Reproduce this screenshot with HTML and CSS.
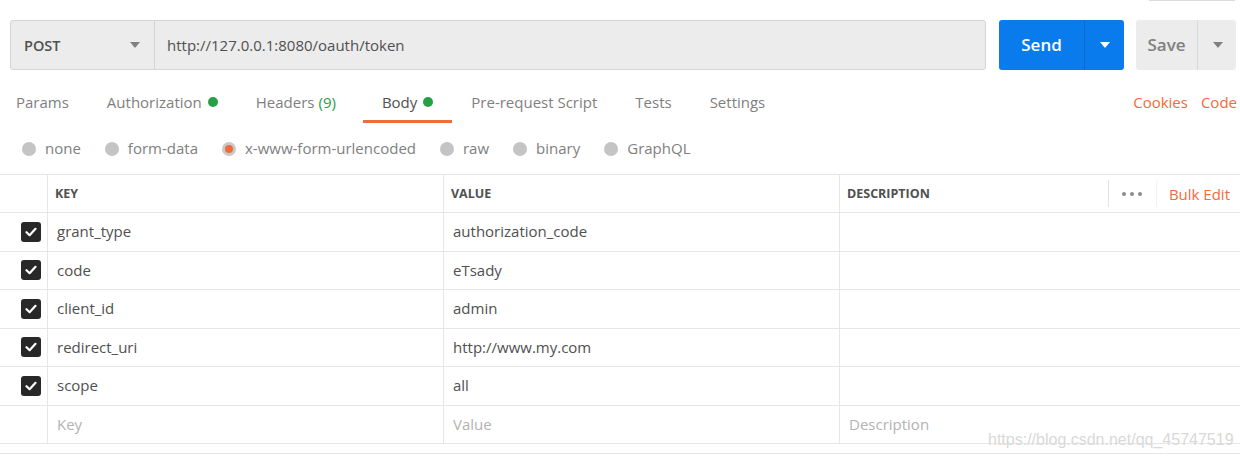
FILE: index.html
```html
<!DOCTYPE html>
<html>
<head>
<meta charset="utf-8">
<link rel="stylesheet" href="styles.css">
</head>
<body>
<div class="page">
  <div class="topstrip"></div>
  <div class="request">
    <div class="url-bar">
      <div class="method">
        <span class="method-name">POST</span>
        <span class="caret gray"></span>
      </div>
      <div class="url">http://127.0.0.1:8080/oauth/token</div>
    </div>
    <div class="send">
      <div class="send-main">Send</div>
      <div class="send-drop"><span class="caret white"></span></div>
    </div>
    <div class="save">
      <div class="save-main">Save</div>
      <div class="save-drop"><span class="caret gray"></span></div>
    </div>
  </div>

  <div class="tabs">
    <div class="tab first">Params</div>
    <div class="tab">Authorization <span class="dot"></span></div>
    <div class="tab">Headers <span class="count">(9)</span></div>
    <div class="tab active">Body <span class="dot"></span></div>
    <div class="tab">Pre-request Script</div>
    <div class="tab">Tests</div>
    <div class="tab">Settings</div>
    <div class="tab-links">
      <span class="link">Cookies</span>
      <span class="link">Code</span>
    </div>
  </div>

  <div class="radios">
    <div class="radio"><span class="circle"></span>none</div>
    <div class="radio"><span class="circle"></span>form-data</div>
    <div class="radio"><span class="circle on"></span>x-www-form-urlencoded</div>
    <div class="radio"><span class="circle"></span>raw</div>
    <div class="radio"><span class="circle"></span>binary</div>
    <div class="radio"><span class="circle"></span>GraphQL</div>
  </div>

  <div class="kv">
    <div class="row head">
      <div class="cell chk"></div>
      <div class="cell">KEY</div>
      <div class="cell">VALUE</div>
      <div class="cell desc-head">
        <span>DESCRIPTION</span>
        <div class="actions">
          <span class="more"><svg width="20" height="4" viewBox="0 0 20 4"><circle cx="2" cy="2" r="2" fill="#8a8a8a"/><circle cx="10" cy="2" r="2" fill="#8a8a8a"/><circle cx="18" cy="2" r="2" fill="#8a8a8a"/></svg></span>
          <span class="bulk">Bulk Edit</span>
        </div>
      </div>
    </div>
    <div class="row">
      <div class="cell chk"><span class="box"><svg width="12" height="10" viewBox="0 0 12 10"><path d="M1.5 5.2 L4.6 8.2 L10.5 1.8" fill="none" stroke="#fff" stroke-width="2.2" stroke-linecap="round" stroke-linejoin="round"/></svg></span></div>
      <div class="cell">grant_type</div>
      <div class="cell">authorization_code</div>
      <div class="cell"></div>
    </div>
    <div class="row">
      <div class="cell chk"><span class="box"><svg width="12" height="10" viewBox="0 0 12 10"><path d="M1.5 5.2 L4.6 8.2 L10.5 1.8" fill="none" stroke="#fff" stroke-width="2.2" stroke-linecap="round" stroke-linejoin="round"/></svg></span></div>
      <div class="cell">code</div>
      <div class="cell">eTsady</div>
      <div class="cell"></div>
    </div>
    <div class="row">
      <div class="cell chk"><span class="box"><svg width="12" height="10" viewBox="0 0 12 10"><path d="M1.5 5.2 L4.6 8.2 L10.5 1.8" fill="none" stroke="#fff" stroke-width="2.2" stroke-linecap="round" stroke-linejoin="round"/></svg></span></div>
      <div class="cell">client_id</div>
      <div class="cell">admin</div>
      <div class="cell"></div>
    </div>
    <div class="row">
      <div class="cell chk"><span class="box"><svg width="12" height="10" viewBox="0 0 12 10"><path d="M1.5 5.2 L4.6 8.2 L10.5 1.8" fill="none" stroke="#fff" stroke-width="2.2" stroke-linecap="round" stroke-linejoin="round"/></svg></span></div>
      <div class="cell">redirect_uri</div>
      <div class="cell">http://www.my.com</div>
      <div class="cell"></div>
    </div>
    <div class="row">
      <div class="cell chk"><span class="box"><svg width="12" height="10" viewBox="0 0 12 10"><path d="M1.5 5.2 L4.6 8.2 L10.5 1.8" fill="none" stroke="#fff" stroke-width="2.2" stroke-linecap="round" stroke-linejoin="round"/></svg></span></div>
      <div class="cell">scope</div>
      <div class="cell">all</div>
      <div class="cell"></div>
    </div>
    <div class="row">
      <div class="cell chk"></div>
      <div class="cell ph">Key</div>
      <div class="cell ph">Value</div>
      <div class="cell ph">Description</div>
    </div>
  </div>
  <div class="footer-line"></div>
  <div class="watermark">https://blog.csdn.net/qq_45747519</div>
</div>
</body>
</html>
```

FILE: styles.css
```css
* { box-sizing: border-box; }
html, body { margin: 0; padding: 0; background: #fff; }
body {
  font-family: "Open Sans", "DejaVu Sans", sans-serif;
  font-size: 15px;
  color: #505050;
}
.page { position: relative; width: 1240px; height: 460px; overflow: hidden; }

.topstrip {
  height: 1px;
  width: 86px;
  margin-left: auto;
  margin-right: 5px;
  background: #dcdcdc;
}

.request {
  display: flex;
  margin-top: 19px;
  padding: 0 4px 0 10px;
  height: 50px;
}
.url-bar {
  flex: 1;
  display: flex;
  background: #ececec;
  border: 1px solid #d5d5d5;
  border-radius: 3px;
}
.method {
  width: 144px;
  display: flex;
  align-items: center;
  justify-content: space-between;
  padding: 0 14px 0 13px;
  border-right: 1px solid #d5d5d5;
}
.method-name { font-weight: 600; color: #505050; font-size: 14.5px; }
.url { display: flex; align-items: center; padding-left: 12px; color: #505050; }

.caret {
  width: 0; height: 0;
  border-left: 5px solid transparent;
  border-right: 5px solid transparent;
  border-top: 6px solid #808080;
}
.caret.white { border-top-color: #fff; }
.caret.gray { border-top-color: #808080; }

.send {
  margin-left: 13px;
  width: 125px;
  display: flex;
  background: #097bed;
  border-radius: 3px;
}
.send-main {
  width: 86px;
  display: flex; align-items: center; justify-content: center;
  color: #fff; font-size: 17px; font-weight: 600;
  padding-bottom: 1px;
  border-right: 1px solid #0a6cd2;
}
.send-drop { flex: 1; display: flex; align-items: center; justify-content: center; padding-left: 1px; }

.save {
  margin-left: 12px;
  width: 100px;
  display: flex;
  background: #ececec;
  border-radius: 3px;
}
.save-main {
  width: 62px;
  display: flex; align-items: center; justify-content: center;
  color: #808080; font-size: 17px; font-weight: 600;
  padding-bottom: 1px;
  border-right: 1px solid #d9d9d9;
}
.save-drop { flex: 1; display: flex; align-items: center; justify-content: center; padding-left: 2px; }

.tabs {
  display: flex;
  height: 53px;
}
.tab {
  display: flex;
  align-items: center;
  height: 53px;
  padding: 15px 19px 1px;
  border-bottom: 3px solid transparent;
  color: #808080;
  white-space: nowrap;
}
.tab.first { padding-left: 16px; }
.tab.active { color: #505050; border-bottom-color: #f26b3a; margin-left: 8px; }
.dot {
  display: inline-block;
  width: 10px; height: 10px;
  border-radius: 50%;
  background: #26a047;
  margin-left: 6px;
}
.count { color: #26a047; margin-left: 4px; }
.tab-links {
  margin-left: auto;
  display: flex;
  align-items: center;
  gap: 13px;
  padding: 15px 3px 4px 0;
}
.link { color: #f26b3a; }

.radios {
  display: flex;
  align-items: center;
  height: 51px;
  padding: 0 0 1px 22px;
  gap: 24px;
}
.radio { display: flex; align-items: center; gap: 9px; color: #808080; }
.circle {
  width: 14px; height: 14px;
  border-radius: 50%;
  background: #c4c4c4;
  margin-top: 1px;
}
.circle.on { background: #f26b3a; border: 3px solid #c9c9c9; }

.kv { border-top: 1px solid #e6e6e6; }
.row {
  display: grid;
  grid-template-columns: 47px 396px 396px 1fr;
  height: 38.5px;
  border-bottom: 1px solid #e6e6e6;
}
.row.head { height: 38px; }
.cell {
  display: flex;
  align-items: center;
  padding-left: 9px;
  padding-bottom: 1px;
  border-left: 1px solid #e6e6e6;
  color: #505050;
  white-space: nowrap;
}
.cell.chk { border-left: none; padding-left: 21px; padding-bottom: 0; }
.head .cell { font-size: 12.5px; font-weight: 700; padding-left: 7px; padding-bottom: 0; }
.head .cell.chk { padding-left: 0; }
.cell.ph { color: #b3b3b3; }

.box {
  width: 20px; height: 20px;
  border-radius: 3px;
  background: #282828;
  display: flex; align-items: center; justify-content: center;
}

.desc-head { justify-content: space-between; padding-right: 10px; }
.actions { display: flex; align-items: center; height: 100%; }
.more {
  display: flex; align-items: center;
  height: 27px;
  border-left: 1px solid #e3e3e3;
  padding: 0 14px 0 13px;
}
.bulk {
  display: flex; align-items: center;
  height: 27px;
  border-left: 1px solid #f1f1f1;
  border-radius: 3px 0 0 3px;
  padding-left: 12px;
  color: #f26b3a;
  font-size: 15px;
  font-weight: 400;
}

.footer-line { margin-top: 9px; border-top: 1px solid #e6e6e6; }

.watermark {
  position: absolute;
  left: 988px;
  top: 431px;
  font-family: "Liberation Sans", Arial, sans-serif;
  font-size: 16px;
  color: #d9d9d9;
  white-space: nowrap;
}
```
